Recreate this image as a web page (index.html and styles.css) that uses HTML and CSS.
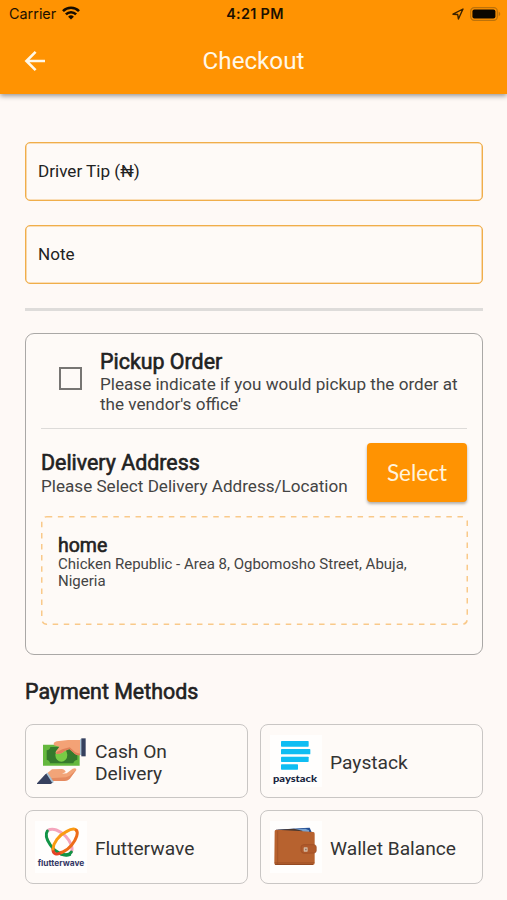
FILE: index.html
```html
<!DOCTYPE html>
<html lang="en">
<head>
<meta charset="utf-8">
<title>Checkout</title>
<link rel="stylesheet" href="styles.css">
</head>
<body>
<header class="top">
  <div class="status">
    <div class="carrier"><span>Carrier</span>
      <svg width="18" height="14" viewBox="0 0 18 14" fill="none" stroke="#170d00" stroke-width="2.6"><path d="M1 5.1a11.3 11.3 0 0 1 16 0M3.9 8.3a7.2 7.2 0 0 1 10.2 0"/><path d="M9 13.6 6.1 10.7a4.1 4.1 0 0 1 5.8 0Z" fill="#170d00" stroke="none"/></svg>
    </div>
    <div class="time">4:21 PM</div>
    <div class="indicators">
      <svg width="12" height="12" viewBox="0 0 12 12" fill="none" stroke="#3a2200" stroke-width="1.4" stroke-linejoin="round"><path d="M1 6.2 11 1 6.4 11 5.7 6.5Z"/></svg>
      <svg width="31" height="14" viewBox="0 0 31 14"><rect x=".7" y=".7" width="26.6" height="12.6" rx="3.6" fill="none" stroke="#bd720a" stroke-width="1.2"/><rect x="2.4" y="2.4" width="23" height="9.2" rx="2" fill="#0c0700"/><path d="M28.7 4.8c2 .7 2 3.7 0 4.4Z" fill="#bd720a"/></svg>
    </div>
  </div>
  <div class="appbar">
    <svg class="back" width="22" height="22" viewBox="0 0 22 22" fill="none" stroke="#fff8e8" stroke-width="2.6"><path d="M21 11H3M11.6 1.8 2.4 11l9.2 9.2"/></svg>
    <h1>Checkout</h1>
  </div>
</header>
<main>
  <div class="field">Driver Tip (₦)</div>
  <div class="field">Note</div>
  <div class="rule"></div>
  <section class="panel">
    <div class="pickup">
      <span class="checkbox"></span>
      <div>
        <h2 class="pickup-title">Pickup Order</h2>
        <p class="pickup-text">Please indicate if you would pickup the order at the vendor's office'</p>
      </div>
    </div>
    <div class="delivery">
      <div class="delivery-copy">
        <h2 class="delivery-title">Delivery Address</h2>
        <p>Please Select Delivery Address/Location</p>
      </div>
      <button class="select">Select</button>
    </div>
    <div class="address">
      <svg class="dashes" width="427" height="109"><rect x=".75" y=".75" width="425.5" height="107.5" rx="5"/></svg>
      <h3>home</h3>
      <p>Chicken Republic - Area 8, Ogbomosho Street, Abuja, Nigeria</p>
    </div>
  </section>
  <h2 class="methods-title">Payment Methods</h2>
  <div class="methods">
    <div class="method">
      <svg class="logo" viewBox="45 51 156 156">
        <path d="M69 80h110v63H69Z" fill="#65b83e"/><path d="M91 87h69q1 8 12 10v28q-10 2-12 11H90q-1-9-10-11V97q10-1 11-10Z" fill="#357a2c"/>
        <ellipse cx="124" cy="111" rx="18" ry="20" fill="#78cc45"/>
        <path d="M181 66v45q-8 3-16-3l-17-15-14 6q-9 9-24 9-7-4 1-12l7-10-16-4q-4-9 8-12l34-4Z" fill="#f3a276"/>
        <path d="m110 102 17-8 22-6 16 14q8 5 16 4v5q-8 3-16-3l-17-15-14 6q-9 9-24 9-3-3 0-6Z" fill="#df8058"/>
        <path d="M180 64h5v47h-5Z" fill="#a9c3d5"/><path d="M184 61h13v54h-13Z" fill="#35405e"/>
        <path d="m76 170 20-16 29-1q10 1 12 9l-11 5 14-1 18-14q12-4 11 4l-20 25q-7 8-17 8H92Z" fill="#f2a478"/>
        <path d="m89 181 49-3q10-2 17-10l14-13-20 28q-6 6-16 6H92Z" fill="#e58a60"/>
        <path d="m51 196 25-27 6-3 18 27-8 5H51Z" fill="#37415f"/><path d="m78 166 5-2 18 27-4 4Z" fill="#a9c3d5"/>
      </svg>
      <span>Cash On Delivery</span>
    </div>
    <div class="method">
      <svg class="logo" viewBox="45 51 156 156">
        <path d="M45 51h156v156H45Z" fill="#fffefd"/>
        <g fill="#10bdf2"><rect x="78" y="69" width="83" height="17" rx="2"/><rect x="78" y="93" width="88" height="16" rx="2"/><rect x="78" y="116" width="83" height="16" rx="2"/><rect x="78" y="139" width="51" height="16" rx="2"/></g>
        <text class="paystack-name" x="54" y="192" textLength="132" lengthAdjust="spacingAndGlyphs">paystack</text>
      </svg>
      <span>Paystack</span>
    </div>
    <div class="method">
      <svg class="logo" viewBox="45 51 156 156">
        <path d="M45 51h156v156H45Z" fill="#fffefd"/>
        <g fill="none" stroke-width="9" stroke-linecap="round">
          <path d="M84 79C98 71 119 78 137 97c16 17 23 36 17 47" stroke="#f4a5bd"/>
          <path d="M82 81c-6 9-2 26 9 42 15 22 41 35 58 29" stroke="#129447"/>
          <path d="M154 144c-5 8-17 10-31 6" stroke="#129447"/>
          <path d="M125 145c-14 10-27 5-26-10" stroke="#e54224"/>
          <path d="M99 135c1-18 17-41 40-52 12-7 25-10 30-4" stroke="#fa9b12"/>
          <path d="M169 79c7 7 0 26-13 43-10 13-20 19-31 24" stroke="#ed6c19"/>
        </g>
        <text class="flutter-name" x="53" y="187" textLength="140" lengthAdjust="spacingAndGlyphs">flutterwave</text>
      </svg>
      <span>Flutterwave</span>
    </div>
    <div class="method">
      <svg class="logo" viewBox="45 51 156 156">
        <path d="M45 51h156v156H45Z" fill="#fffefd"/>
        <path d="m63 77 83-5 18-1 6 14H63Z" fill="#244f94"/><path d="m78 79 73-5 11 5v5H78Z" fill="#78a1cf"/><path d="m68 77 49-3 25 6v4H68Z" fill="#49372f"/>
        <path d="M59 82q0-5 5-5l68 4 43 3q4 0 4 5v88q0 6-6 6H63q-5 0-5-5Z" fill="#b7622f"/>
        <path d="M68 80v101M59 176h119" fill="none" stroke="#9d5026" stroke-width="2"/><path d="M60 181h114" stroke="#84401f" stroke-width="2.5"/>
        <path d="M178 122q6 1 6 7v11q0 6-6 7l-31 1q-8-1-9-7v-12q0-6 8-7Z" fill="#b05a2b" stroke="#924520" stroke-width="1.5"/>
        <rect x="146" y="130" width="12" height="13" rx="2" fill="#d4b9a1"/><path d="M150 134h5v5h-5Z" fill="#957260"/>
      </svg>
      <span>Wallet Balance</span>
    </div>
  </div>
</main>
</body>
</html>
```

FILE: styles.css
```css
* { box-sizing: border-box; }
body {
  margin: 0;
  height: 900px;
  overflow: hidden;
  background: #fef9f6;
  color: #222;
  font-family: Roboto, "Liberation Sans", sans-serif;
}
h1, h2, h3, p { margin: 0; font-weight: 400; }
.top {
  height: 94px;
  background: #ff9302;
  box-shadow: 0 2px 5px rgba(0, 0, 0, .4);
}
.status {
  display: grid;
  grid-template-columns: 1fr auto 1fr;
  align-items: center;
  height: 28px;
  padding: 0 6px 0 9px;
  color: #1c1000;
  font: 14.4px/28px Inter, sans-serif;
}
.carrier { display: flex; align-items: center; gap: 6px; }
.carrier svg { margin-top: -3px; }
.time { font-weight: 600; font-size: 14.4px; letter-spacing: .3px; }
.indicators { display: flex; align-items: center; justify-content: flex-end; gap: 6px; margin-top: -1px; }
.appbar {
  display: grid;
  grid-template-columns: 1fr auto 1fr;
  align-items: center;
  height: 66px;
  padding: 0 24px;
}
.appbar h1 { color: #fff8e8; font-size: 24.2px; line-height: 66px; }
main { padding: 48px 24px 0 25px; }
.field {
  height: 59px;
  margin-bottom: 24px;
  padding: 0 12px;
  border: 1px solid #f0ae4a;
  border-radius: 5px;
  background: #fefaf7;
  box-shadow: inset 0 0 0 .6px #f5c27a;
  font-size: 17.1px;
  line-height: 56px;
}
.rule { height: 3px; background: #dedcda; }
.panel {
  height: 322px;
  margin-top: 22px;
  padding: 0 15px;
  border: 1px solid #aaa8a6;
  border-radius: 9px;
  background: #fefaf7;
  color: #444;
}
.pickup {
  display: flex;
  height: 95px;
  padding: 15px 0 0 18px;
  border-bottom: 1px solid #dddbd9;
}
.checkbox { flex: none; width: 23px; height: 23px; margin: 18px 18px 0 0; border: 2px solid #777573; }
.pickup-title, .delivery-title, .methods-title, .address h3 { color: #222; -webkit-text-stroke: .6px #222; }
.pickup-title { font-size: 21.4px; line-height: 25px; }
.pickup-text { font-size: 17.1px; line-height: 20px; }
.delivery { display: flex; justify-content: space-between; height: 87px; padding-top: 14px; }
.delivery-copy { padding-top: 7px; white-space: nowrap; }
.delivery-title { font-size: 21.4px; line-height: 25px; }
.delivery-copy p { font-size: 17.1px; line-height: 22px; }
.select {
  width: 100px;
  height: 59px;
  padding: 0;
  border: 0;
  border-radius: 4px;
  background: #ff9302;
  box-shadow: 0 2px 3px rgba(0, 0, 0, .3);
  color: #fff4dc;
  font: 22.5px/56px Lato, sans-serif;
}
.address { position: relative; height: 109px; padding: 19px 17px; }
.dashes { position: absolute; top: 0; left: 0; overflow: visible; }
.dashes rect { fill: none; stroke: #f9c98a; stroke-width: 1.5; stroke-dasharray: 5.5 5.6; }
.address h3 { font-size: 19.5px; line-height: 21px; }
.address p { max-width: 365px; font-size: 15px; line-height: 17px; }
.methods-title { margin: 24px 0 20px; font-size: 21.4px; line-height: 25px; }
.methods { display: grid; grid-template-columns: 223px 223px; gap: 12px; }
.method {
  display: flex;
  align-items: center;
  gap: 8px;
  height: 74px;
  padding: 0 9px;
  border: 1px solid #c9c6c4;
  border-radius: 8px;
  background: #fefaf7;
  color: #333;
  font-size: 19.2px;
  line-height: 22px;
}
.method span { max-width: 130px; padding-top: 4px; }
.logo { flex: none; width: 52px; height: 52px; }
.paystack-name { fill: #17253f; font: 900 29px Lato, sans-serif; }
.flutter-name { fill: #343866; font: 700 24px Inter, sans-serif; }
```
